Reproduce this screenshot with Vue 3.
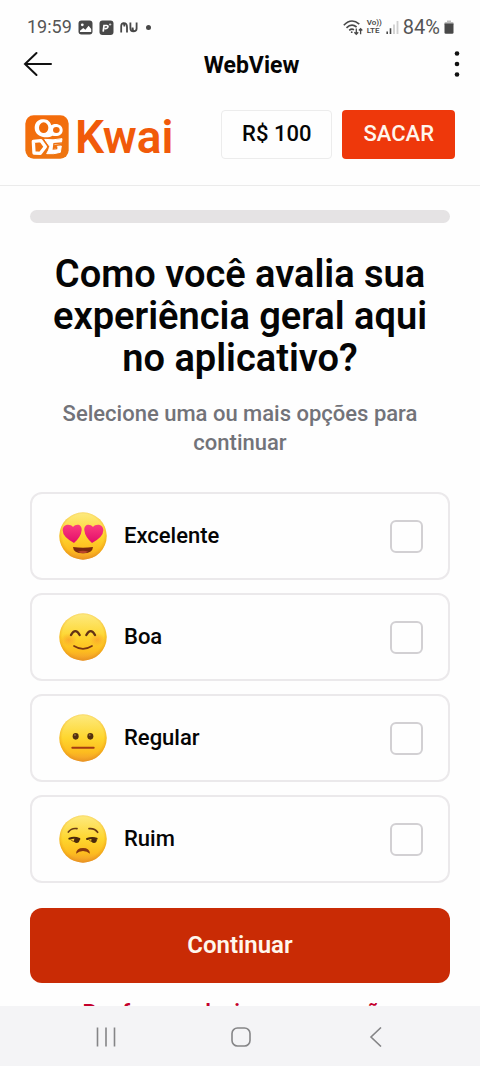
<script setup>
import { ref } from 'vue'

const options = [
  { id: 'excelente', label: 'Excelente' },
  { id: 'boa', label: 'Boa' },
  { id: 'regular', label: 'Regular' },
  { id: 'ruim', label: 'Ruim' },
]
const selected = ref([])
</script>

<template>
  <div class="screen">
    <div class="status">
      <div class="status-group">
        <span class="clock">19:59</span>
        <svg class="note-icon" width="15" height="15" viewBox="0 0 15 15" aria-hidden="true">
          <rect x="0.5" y="0.5" width="14" height="14" rx="3" fill="#484848" />
          <circle cx="4.3" cy="4.8" r="1.4" fill="#fff" />
          <path d="M2 10.8 5.2 8l2.2 1.8L10.6 5.8l2.6 3.2v3H2z" fill="#fff" />
        </svg>
        <svg class="note-icon" width="15" height="15" viewBox="0 0 15 15" aria-hidden="true">
          <rect x="0.5" y="0.5" width="14" height="14.5" rx="3" fill="#484848" />
          <path d="M4.2 11.6 5 5.500H7.800Q9.600 5.800 8.600 7.600 7.800 8.800 5.600 8.500" fill="none" stroke="#fff" stroke-width="1.7" />
          <path d="M10 4.500h2.300M11.100 3.300v2.400" stroke="#ddd" stroke-width="0.8" />
        </svg>
        <svg width="18" height="11" viewBox="0 0 18 11" aria-hidden="true">
          <path d="M1.200 10.500V4Q1.200 1.200 3.800 1.200 7 1.200 7 5v5.500M3 1.200Q4.400 1.500 4.400 4.500M10.400 0.500V6Q10.400 9.400 13.400 9.400 16.600 9.400 16.600 6.500V0.500M12.600 5.500Q12.600 9 14.500 9.400" fill="none" stroke="#484848" stroke-width="1.8" />
        </svg>
        <span class="dot"></span>
      </div>
      <div class="status-group right">
        <svg width="20" height="17" viewBox="0 0 20 17" fill="none" stroke="#484848" stroke-width="1.6" aria-hidden="true">
          <path d="M0.800 6.200Q8.500-1.600 16.300 5.200M3.500 8.900Q8.500 4 13.600 8M6.200 11.400Q8.700 9.200 11 10.800" />
          <circle cx="8.7" cy="13.2" r="0.9" fill="#484848" stroke="none" />
          <path d="M13.300 9.500v5.500M11.400 13.200l1.900 2 1.900-2M17.600 15.200V9.800M15.900 11.500l1.700-1.900 1.700 1.900" stroke-width="1.3" />
        </svg>
        <span class="volte"><span>Vo))</span><span>LTE</span></span>
        <svg width="13" height="14" viewBox="0 0 13 14" aria-hidden="true">
          <path d="M1.200 14v-2.500M4.500 14V8.200" stroke="#484848" stroke-width="1.6" />
          <path d="M8 14V4.500M11.500 14V1" stroke="#d0d0d0" stroke-width="1.8" />
        </svg>
        <span class="charge">84%</span>
        <svg width="10" height="14" viewBox="0 0 10 14" aria-hidden="true">
          <path d="M3 0.500h4v1.500h1.500q1 0 1 1V5h-9V3q0-1 1-1H3z" fill="#bdbdbd" />
          <path d="M0.500 3.500h9v9q0 1.300-1.300 1.300H1.800Q0.500 13.800 0.500 12.500z" fill="#484848" />
        </svg>
      </div>
    </div>

    <div class="titlebar">
      <button class="icon-button" type="button" aria-label="Voltar">
        <svg width="30" height="26" viewBox="0 0 30 26" fill="none" stroke="#111" stroke-width="2" stroke-linecap="round" aria-hidden="true">
          <path d="M28 13H2M13.500 2 2 13l11.500 11" />
        </svg>
      </button>
      <div class="webview">WebView</div>
      <button class="icon-button" type="button" aria-label="Mais opções">
        <svg width="6" height="26" viewBox="0 0 6 26" fill="#111" aria-hidden="true">
          <circle cx="3" cy="2.5" r="2.3" /><circle cx="3" cy="13" r="2.3" /><circle cx="3" cy="23.5" r="2.3" />
        </svg>
      </button>
    </div>

    <header class="brandbar">
      <div class="brand">
        <svg width="44" height="44" viewBox="0 0 132 132" aria-hidden="true">
          <defs>
            <linearGradient id="brandFill" x1="0" y1="0" x2="0.3" y2="1">
              <stop offset="0" stop-color="#f56a0a" /><stop offset="1" stop-color="#ee7410" />
            </linearGradient>
          </defs>
          <rect x="1" y="1" width="130" height="130" rx="25" fill="url(#brandFill)" />
          <path d="M51 13C67 10 76 20 79 31 92 22 113 29 113 45 113 61 98 66 82 62 66 73 29 66 29 39 29 24 37 15 51 13Z" fill="#fff" />
          <ellipse cx="56" cy="38" rx="14" ry="16" fill="#f06b0a" />
          <ellipse cx="94" cy="45" rx="10" ry="9" fill="#f06b0a" />
          <path d="M25 79 48 77 61 95 46 115 27 114Z" fill="none" stroke="#fff" stroke-width="10" stroke-linejoin="round" />
          <path d="M59 73Q83 77 111 71L109 85 86 88 85 102 96 101 97 94 109 93 106 112Q87 118 65 116L71 105 74 94Z" fill="#fff" stroke="#fff" stroke-width="3" stroke-linejoin="round" />
          <path d="M112 84 87 86 85 102 95 101 95 95" fill="none" stroke="#ee7110" stroke-width="4" />
        </svg>
        <span class="wordmark">Kwai</span>
      </div>
      <div class="wallet">
        <div class="balance">R$ 100</div>
        <button class="withdraw" type="button">SACAR</button>
      </div>
    </header>

    <main class="survey">
      <div class="progress" role="progressbar" aria-label="Progresso" aria-valuenow="0" aria-valuemin="0" aria-valuemax="100"></div>
      <h1>Como você avalia sua experiência geral aqui no aplicativo?</h1>
      <p class="hint">Selecione uma ou mais opções para continuar</p>

      <svg class="defs" width="0" height="0" aria-hidden="true">
        <defs>
          <linearGradient id="face" x1="0" y1="0" x2="0" y2="1">
            <stop offset="0" stop-color="#fdea80" /><stop offset="0.5" stop-color="#fed62e" /><stop offset="0.8" stop-color="#fdbc1f" /><stop offset="1" stop-color="#f09a2e" />
          </linearGradient>
          <radialGradient id="shade" cx="0.5" cy="0.47" r="0.54">
            <stop offset="0.8" stop-color="#ef9a18" stop-opacity="0" /><stop offset="1" stop-color="#dc8614" stop-opacity="0.6" />
          </radialGradient>
          <radialGradient id="blush"><stop offset="0" stop-color="#f8852e" stop-opacity="0.5" /><stop offset="1" stop-color="#f8852e" stop-opacity="0" /></radialGradient>
          <linearGradient id="heart" x1="0" y1="0" x2="0" y2="1"><stop offset="0" stop-color="#fb3e7e" /><stop offset="1" stop-color="#e30d6a" /></linearGradient>
        </defs>
      </svg>

      <div class="options">
        <label v-for="option in options" :key="option.id" class="option">
          <svg class="emoji" viewBox="0 0 144 144" aria-hidden="true">
            <circle cx="72" cy="72" r="71" fill="url(#face)" />
            <circle cx="72" cy="72" r="71" fill="url(#shade)" />
            <g v-if="option.id === 'excelente'">
              <path d="M45 93Q11 75 11 55C11 35 34 34 42 45 52 33 70 37 68 55Q66 75 45 93Z" fill="url(#heart)" />
              <path d="M99 93Q78 75 76 55C74 37 92 33 102 45 110 34 133 35 133 55Q133 75 99 93Z" fill="url(#heart)" />
              <path d="M42 105Q72 109 102 105 101 124 72 124 43 124 42 105Z" fill="#79290e" />
              <path d="M56 119Q72 113 88 119 80 124 72 124 64 124 56 119Z" fill="#b9432b" />
            </g>
            <g v-else-if="option.id === 'boa'">
              <ellipse cx="29" cy="80" rx="25" ry="20" fill="url(#blush)" /><ellipse cx="115" cy="80" rx="25" ry="20" fill="url(#blush)" />
              <path d="M36 66Q49 43 62 66M82 66Q95 43 108 66" fill="none" stroke="#633315" stroke-width="7" stroke-linecap="round" />
              <path d="M45 99Q72 116 99 99" fill="none" stroke="#7a3511" stroke-width="5" stroke-linecap="round" />
            </g>
            <g v-else-if="option.id === 'regular'">
              <ellipse cx="50" cy="67" rx="9" ry="10" fill="#53300f" /><ellipse cx="94" cy="67" rx="9" ry="10" fill="#53300f" />
              <circle cx="48" cy="63" r="3" fill="#8d6540" /><circle cx="92" cy="63" r="3" fill="#8d6540" />
              <path d="M40 101H104" stroke="#a53c12" stroke-width="6" stroke-linecap="round" />
            </g>
            <g v-else>
              <path d="M28 51Q38 38 54 41M90 41Q107 39 116 52" fill="none" stroke="#6a3b13" stroke-width="5" stroke-linecap="round" />
              <path d="M31 71Q46 65 61 72M84 72Q99 66 113 71" fill="none" stroke="#4a290c" stroke-width="6" stroke-linecap="round" />
              <path d="M35 74Q48 86 61 76M89 74Q101 86 113 75" fill="none" stroke="#845116" stroke-width="3" stroke-linecap="round" />
              <circle cx="53" cy="76" r="8" fill="#4a290c" /><circle cx="105" cy="76" r="8" fill="#4a290c" />
              <path d="M51 116Q52 99 72 99 92 99 93 116 84 108 72 108 60 108 51 116Z" fill="#87370e" />
            </g>
          </svg>
          <span class="option-label">{{ option.label }}</span>
          <input v-model="selected" type="checkbox" :value="option.id" />
        </label>
      </div>

      <button class="continue" type="button">Continuar</button>
      <p class="error">Por favor, selecione uma opção.</p>
    </main>

    <nav class="system-nav" aria-label="Navegação do sistema">
      <button class="icon-button" type="button" aria-label="Recentes">
        <svg width="20" height="20" viewBox="0 0 20 20" stroke="#858587" stroke-width="1.6" aria-hidden="true"><path d="M1.500 0.500v19M10 0.500v19M18.500 0.500v19" /></svg>
      </button>
      <button class="icon-button" type="button" aria-label="Início">
        <svg width="20" height="20" viewBox="0 0 20 20" fill="none" stroke="#858587" stroke-width="1.6" aria-hidden="true"><rect x="1" y="1" width="18" height="18" rx="5.5" /></svg>
      </button>
      <button class="icon-button" type="button" aria-label="Anterior">
        <svg width="20" height="20" viewBox="0 0 20 20" fill="none" stroke="#858587" stroke-width="1.6" aria-hidden="true"><path d="M15 0.500 5 10l10 9.500" /></svg>
      </button>
    </nav>
  </div>
</template>

<style>
body {
  background: #fefefe;
}
</style>

<style scoped>
.screen {
  display: flex;
  flex-direction: column;
  height: 100vh;
  overflow: hidden;
  font-family: Roboto, "Liberation Sans", sans-serif;
  font-weight: 500;
  color: #050505;
  background: #fefefe;
}
.screen * {
  box-sizing: border-box;
}
button {
  font: inherit;
  border: 0;
  cursor: pointer;
}
svg {
  display: block;
}
.icon-button {
  display: flex;
  padding: 0;
  background: none;
}
.status {
  flex: none;
  display: flex;
  justify-content: space-between;
  align-items: center;
  padding: 16px 26px 0 27px;
  height: 38px;
}
.status-group {
  display: flex;
  align-items: center;
  gap: 6px;
}
.status-group.right {
  gap: 4px;
}
.clock,
.charge {
  font-size: 18px;
  font-weight: 400;
  line-height: 22px;
  color: #555;
}
.charge {
  font-size: 20px;
}
.dot {
  width: 5px;
  height: 5px;
  margin-left: 2px;
  border-radius: 50%;
  background: #484848;
}
.volte {
  display: flex;
  flex-direction: column;
  font-size: 8px;
  font-weight: 600;
  line-height: 8px;
  color: #484848;
}
.titlebar {
  flex: none;
  display: grid;
  grid-template-columns: auto 1fr 10px;
  align-items: center;
  height: 52px;
  padding: 0 20px 0 23px;
}
.titlebar .icon-button:last-child {
  justify-self: end;
}
.webview {
  padding-top: 4px;
  font-size: 23px;
  font-weight: 700;
  line-height: 28px;
  text-align: center;
}
.brandbar {
  flex: none;
  display: flex;
  justify-content: space-between;
  align-items: center;
  height: 96px;
  padding: 0 25px 6px;
  border-bottom: 1px solid #ebebeb;
}
.brand {
  display: flex;
  align-items: center;
  gap: 6px;
  padding-top: 5px;
}
.wordmark {
  font-size: 46px;
  font-weight: 600;
  line-height: 44px;
  color: #f15a0a;
}
.wallet {
  display: flex;
  gap: 10px;
  font-size: 22px;
  line-height: 28px;
}
.balance,
.withdraw {
  display: flex;
  align-items: center;
  justify-content: center;
  height: 49px;
  padding: 0 21px 2px;
  border-radius: 4px;
}
.balance {
  padding: 0 20px 2px;
  border: 1px solid #ececec;
}
.withdraw {
  background: #ee380b;
  color: #fff5ec;
}
.survey {
  flex: 1;
  min-height: 0;
  overflow: hidden;
  padding: 24px 30px 0;
}
.progress {
  height: 13px;
  border-radius: 7px;
  background: #e5e3e4;
}
h1 {
  margin: 30px 0 0;
  font-size: 38px;
  font-weight: 600;
  line-height: 42px;
  text-align: center;
}
.hint {
  margin: 20px 0 0;
  font-size: 22px;
  line-height: 29px;
  text-align: center;
  color: #727379;
}
.defs {
  position: absolute;
}
.options {
  display: grid;
  gap: 13px;
  margin-top: 35px;
}
.option {
  display: flex;
  align-items: center;
  height: 88px;
  padding: 0 25px 0 27px;
  border: 2px solid #ebe9eb;
  border-radius: 12px;
}
.emoji {
  width: 48px;
  height: 48px;
}
.option-label {
  flex: 1;
  margin-left: 17px;
  font-size: 22px;
  line-height: 28px;
}
.option input {
  appearance: none;
  width: 33px;
  height: 33px;
  margin: 0;
  border: 2px solid #d2d0d3;
  border-radius: 6px;
}
.option input:checked {
  border-color: #c92b05;
  background: #c92b05;
}
.continue {
  width: 100%;
  height: 75px;
  margin-top: 25px;
  padding: 0 0 2px;
  border-radius: 12px;
  background: #c92b05;
  color: #fff7ed;
  font-size: 24px;
  font-weight: 600;
}
.error {
  margin: 16px 0 0;
  font-size: 22px;
  font-weight: 600;
  line-height: 28px;
  text-align: center;
  color: #c4002b;
}
.system-nav {
  flex: none;
  display: grid;
  grid-template-columns: repeat(3, 135px);
  justify-content: center;
  justify-items: center;
  align-items: center;
  height: 60px;
  padding: 2px 0 0 2px;
  background: #f4f4f6;
}
</style>
